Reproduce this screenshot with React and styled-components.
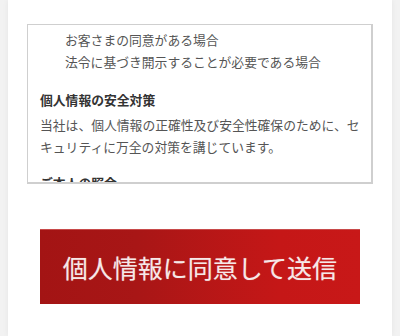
import React from 'react';
import styled, { createGlobalStyle } from 'styled-components';

const GlobalStyle = createGlobalStyle`
  html, body {
    margin: 0;
    padding: 0;
    background: #f2f2f2;
  }
  body {
    font-family: 'Noto Sans CJK JP', 'Noto Sans', sans-serif;
  }
`;

const Page = styled.div`
  width: 400px;
  height: 336px;
  overflow: hidden;
`;

const Panel = styled.main`
  margin: 0 8px;
  height: 336px;
  background: #fff;
  box-shadow: 0 0 6px rgba(0, 0, 0, 0.06);
  padding-top: 24px;
  box-sizing: border-box;
`;

const PolicyBox = styled.div`
  margin: 0 19px;
  height: 160px;
  box-sizing: border-box;
  border: 1px solid #cfcfcf;
  border-width: 1px 2px 2px 1px;
  overflow: hidden;
  padding: 4px 8px 0 12px;
  font-size: 12.8px;
  line-height: 22px;
  color: #555;
`;

const List = styled.ul`
  list-style: none;
  margin: 0 0 16px;
  padding: 0 0 0 25px;
`;

const Heading = styled.h3`
  margin: ${(p) => (p.$first ? '0' : '14px')} 0 3px;
  font-size: 12.8px;
  line-height: 22px;
  font-weight: 700;
  color: #333;
`;

const Text = styled.p`
  margin: 0;
`;

const Actions = styled.div`
  display: flex;
  justify-content: center;
  padding-top: 45px;
`;

const SubmitButton = styled.button`
  width: 320px;
  height: 75px;
  border: none;
  border-top: 1px solid #c84a4a;
  border-radius: 0;
  background: linear-gradient(90deg, #a31414 0%, #a81616 30%, #c51717 75%, #c81818 100%);
  color: #f6e8e8;
  font-family: 'Noto Sans CJK JP', 'Noto Sans', sans-serif;
  font-size: 25px;
  line-height: 30px;
  font-weight: 400;
  text-shadow: 0 0 1px rgba(255, 255, 255, 0.4);
  cursor: pointer;
  padding: 0;
`;

const App = () => {
  return (
    <Page>
      <GlobalStyle />
      <Panel>
        <PolicyBox>
          <List>
            <li>お客さまの同意がある場合</li>
            <li>法令に基づき開示することが必要である場合</li>
          </List>
          <Heading $first>個人情報の安全対策</Heading>
          <Text>
            当社は、個人情報の正確性及び安全性確保のために、セキュリティに万全の対策を講じています。
          </Text>
          <Heading>ご本人の照会</Heading>
          <Text>
            お客さまがご本人の個人情報の照会・修正・削除などをご希望される場合には、ご本人であることを確認の上、対応させていただきます。
          </Text>
        </PolicyBox>
        <Actions>
          <SubmitButton type="submit">個人情報に同意して送信</SubmitButton>
        </Actions>
      </Panel>
    </Page>
  );
};

export default App;
